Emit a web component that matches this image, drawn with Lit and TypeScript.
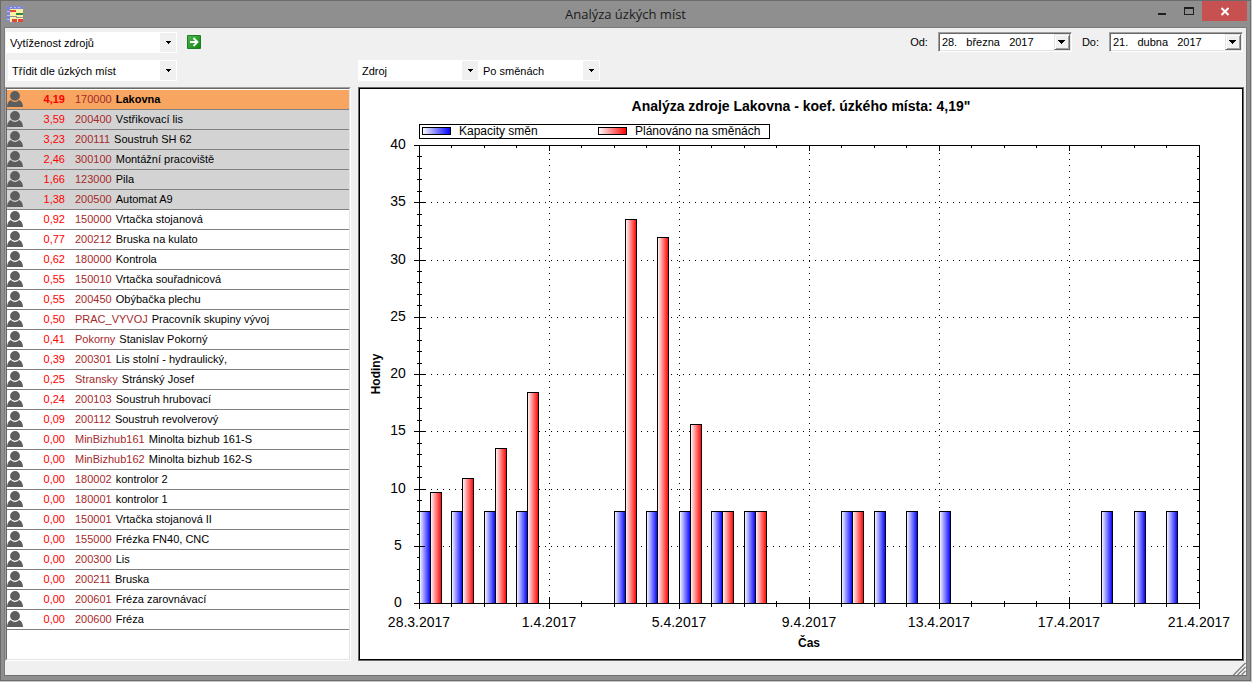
import { LitElement, html, svg, css } from "lit";
import { customElement, property, state, query } from "lit/decorators.js";
import { classMap } from "lit/directives/class-map.js";

interface Resource {
  coef: string;
  code: string;
  name: string;
}

const RESOURCES: Resource[] = [
  ["4,19", "170000", "Lakovna"],
  ["3,59", "200400", "Vstřikovací lis"],
  ["3,23", "200111", "Soustruh SH 62"],
  ["2,46", "300100", "Montážní pracoviště"],
  ["1,66", "123000", "Pila"],
  ["1,38", "200500", "Automat A9"],
  ["0,92", "150000", "Vrtačka stojanová"],
  ["0,77", "200212", "Bruska na kulato"],
  ["0,62", "180000", "Kontrola"],
  ["0,55", "150010", "Vrtačka souřadnicová"],
  ["0,55", "200450", "Obýbačka plechu"],
  ["0,50", "PRAC_VYVOJ", "Pracovník skupiny vývoj"],
  ["0,41", "Pokorny", "Stanislav Pokorný"],
  ["0,39", "200301", "Lis stolní - hydraulický,"],
  ["0,25", "Stransky", "Stránský Josef"],
  ["0,24", "200103", "Soustruh hrubovací"],
  ["0,09", "200112", "Soustruh revolverový"],
  ["0,00", "MinBizhub161", "Minolta bizhub 161-S"],
  ["0,00", "MinBizhub162", "Minolta bizhub 162-S"],
  ["0,00", "180002", "kontrolor 2"],
  ["0,00", "180001", "kontrolor 1"],
  ["0,00", "150001", "Vrtačka stojanová II"],
  ["0,00", "155000", "Frézka FN40, CNC"],
  ["0,00", "200300", "Lis"],
  ["0,00", "200211", "Bruska"],
  ["0,00", "200601", "Fréza zarovnávací"],
  ["0,00", "200600", "Fréza"],
].map(([coef, code, name]) => ({ coef, code, name }));

interface Shift {
  day: number;
  capacity: number;
  planned?: number;
}

const SHIFTS: Shift[] = [
  { day: 0, capacity: 8, planned: 9.7 },
  { day: 1, capacity: 8, planned: 10.9 },
  { day: 2, capacity: 8, planned: 13.5 },
  { day: 3, capacity: 8, planned: 18.4 },
  { day: 6, capacity: 8, planned: 33.5 },
  { day: 7, capacity: 8, planned: 32 },
  { day: 8, capacity: 8, planned: 15.6 },
  { day: 9, capacity: 8, planned: 8 },
  { day: 10, capacity: 8, planned: 8 },
  { day: 13, capacity: 8, planned: 8 },
  { day: 14, capacity: 8 },
  { day: 15, capacity: 8 },
  { day: 16, capacity: 8 },
  { day: 21, capacity: 8 },
  { day: 22, capacity: 8 },
  { day: 23, capacity: 8 },
];

const DATE_LABELS = ["28.3.2017", "1.4.2017", "5.4.2017", "9.4.2017", "13.4.2017", "17.4.2017", "21.4.2017"];
const DAYS = 24;
const MAX_HOURS = 40;

@customElement("combo-box")
class ComboBox extends LitElement {
  @property() label = "";
  @property({ attribute: false }) options: string[] = [];

  static styles = css`
    :host {
      display: block;
      position: relative;
      height: 21px;
      background: #fff;
    }
    select {
      appearance: none;
      display: block;
      box-sizing: border-box;
      width: 100%;
      height: 21px;
      margin: 0;
      padding: 1px 18px 0 4px;
      border: 0;
      border-radius: 0;
      background: transparent;
      color: #000;
      font: 11px/20px "Liberation Sans", Arial, sans-serif;
    }
    .arrow {
      position: absolute;
      top: 1px;
      right: 1px;
      width: 16px;
      height: 19px;
      background: #f0f0f0;
      pointer-events: none;
    }
  `;

  render() {
    return html`
      <svg class="arrow" viewBox="0 0 16 19" aria-hidden="true" shape-rendering="crispEdges">
        <path d="M6 8h5v1h-1v1h-1v1h-1v-1h-1v-1h-1z" fill="#000" />
      </svg>
      <select aria-label=${this.label}>
        ${this.options.map((o) => html`<option>${o}</option>`)}
      </select>
    `;
  }
}

@customElement("date-field")
class DateField extends LitElement {
  @property() label = "";
  @property() value = "";

  static styles = css`
    :host {
      display: flex;
      align-items: center;
      gap: 10px;
      font: 11px/20px "Liberation Sans", Arial, sans-serif;
      color: #000;
    }
    .box {
      box-sizing: border-box;
      display: flex;
      width: 134px;
      height: 20px;
      border: 1px solid;
      border-color: #a0a0a0 #fff #fff #a0a0a0;
      background: #fff;
      box-shadow: inset 1px 1px #696969, inset -1px -1px #e3e3e3;
      padding: 1px;
    }
    input {
      flex: 1;
      min-width: 0;
      margin: 0;
      padding: 1px 0 0 2px;
      border: 0;
      background: transparent;
      font: inherit;
      line-height: 15px;
      color: #000;
    }
    button {
      width: 16px;
      height: 16px;
      padding: 0;
      border: 1px solid;
      border-color: #e3e3e3 #696969 #696969 #e3e3e3;
      background: #f0f0f0;
      box-shadow: inset 1px 1px #fff, inset -1px -1px #a0a0a0;
    }
    svg {
      display: block;
    }
  `;

  render() {
    return html`
      <label for="date">${this.label}</label>
      <div class="box">
        <input id="date" type="text" .value=${this.value} />
        <button type="button" aria-label="Kalendář">
          <svg width="14" height="14" viewBox="0 0 14 14" shape-rendering="crispEdges">
            <path d="M3 5h7v1h-1v1h-1v1h-1v1h-1v-1h-1v-1h-1v-1h-1z" fill="#000" />
          </svg>
        </button>
      </div>
    `;
  }
}

@customElement("resource-list")
class ResourceList extends LitElement {
  @property({ attribute: false }) items: Resource[] = [];
  @state() private selected = 0;

  static styles = css`
    :host {
      display: block;
      border: 1px solid;
      border-color: #a0a0a0 #fff #fff #a0a0a0;
      background: #fff;
      font: 11px/18px "Liberation Sans", Arial, sans-serif;
    }
    ul {
      box-sizing: border-box;
      height: 100%;
      margin: 0;
      padding: 1px 0 0;
      border: 1px solid;
      border-color: #696969 #e3e3e3 #e3e3e3 #696969;
      list-style: none;
      overflow: hidden;
    }
    .row {
      display: flex;
      box-sizing: border-box;
      height: 20px;
      border-bottom: 1px solid #808080;
      color: #000;
      white-space: nowrap;
    }
    .hot {
      background: #d3d3d3;
    }
    .selected {
      background: #f7a560;
    }
    .icon {
      width: 16px;
      height: 16px;
      margin-top: 1px;
      flex: none;
    }
    .coef {
      width: 42px;
      text-align: right;
      color: #f00;
    }
    .code {
      margin-left: 10px;
      color: #a52a2a;
    }
    .name {
      margin-left: 4px;
    }
    .selected .coef,
    .selected .name {
      font-weight: bold;
    }
  `;

  render() {
    return html`<ul>
      ${this.items.map(
        (r, i) => html`<li
          class=${classMap({
            row: true,
            selected: i === this.selected,
            hot: i !== this.selected && parseFloat(r.coef) >= 1,
          })}
          @click=${() => (this.selected = i)}
        >
          <svg class="icon" viewBox="0 0 16 16" aria-hidden="true">
            <path d="M0 16C0.2 12.5 1.4 9.6 3.8 8.9Q8 13 12.2 8.9C14.6 9.6 15.8 12.5 16 16Z" fill="#5d5d5d" />
            <circle cx="8" cy="4.9" r="4.9" fill="#5d5d5d" />
          </svg>
          <span class="coef">${r.coef}</span>
          <span class="code">${r.code}</span>
          <span class="name">${r.name}</span>
        </li>`
      )}
    </ul>`;
  }
}

@customElement("shift-chart")
class ShiftChart extends LitElement {
  @query(".plot") private plot!: HTMLElement;
  @state() private w = 882;
  @state() private h = 570;
  private observer?: ResizeObserver;

  static styles = css`
    :host {
      display: flex;
      border: 1px solid #696969;
      background: #fff;
    }
    .plot {
      flex: 1;
      min-width: 0;
      border: 1px solid #000;
      overflow: hidden;
    }
    svg {
      display: block;
    }
    text {
      font-family: "Liberation Sans", Arial, sans-serif;
      font-size: 14px;
      fill: #000;
    }
    .middle {
      text-anchor: middle;
    }
    .title {
      font-weight: bold;
    }
    .axis-title {
      font-size: 12px;
      font-weight: bold;
    }
    .legend {
      font-size: 12px;
    }
    .line {
      stroke: #000;
      fill: none;
    }
    .grid {
      stroke: #000;
      stroke-dasharray: 1 5;
    }
    .bar {
      stroke: #000;
    }
  `;

  firstUpdated() {
    this.observer = new ResizeObserver(() => this.measure());
    this.observer.observe(this.plot);
  }

  disconnectedCallback() {
    super.disconnectedCallback();
    this.observer?.disconnect();
  }

  private measure() {
    this.w = Math.max(500, this.plot.clientWidth);
    this.h = Math.max(300, this.plot.clientHeight);
  }

  private bar(x0: number, x1: number, y: number, bottom: number, fill: string) {
    return svg`<rect class="bar" x=${x0 + 0.5} y=${y + 0.5} width=${x1 - x0} height=${bottom - y} fill="url(#${fill})" />`;
  }

  render() {
    const { w, h } = this;
    const left = 59;
    const right = w - 43;
    const top = 56;
    const bottom = h - 56;
    const dayWidth = (right - left) / DAYS;
    const snap = (v: number) => Math.ceil(v - 0.5);
    const x = (d: number) => snap(left + d * dayWidth);
    const y = (v: number) => Math.round(bottom - (v * (bottom - top)) / MAX_HOURS);
    const mid = (left + right) / 2;

    const ticks = [];
    const grid = [];
    for (let v = 0; v <= MAX_HOURS; v++) {
      const major = v % 5 === 0;
      const yy = y(v) + 0.5;
      const out = major ? 5 : 2;
      ticks.push(`M${left - out} ${yy}h${out * 2 + 1}M${right + 1} ${yy}h${major ? -6 : -3}`);
      if (major && v > 0 && v < MAX_HOURS) grid.push(`M${left} ${yy}H${right}`);
    }
    for (let d = 0; d <= DAYS; d++) {
      const major = d % 4 === 0;
      const xx = x(d) + 0.5;
      ticks.push(
        `M${xx} ${bottom + (major ? 6 : 4)}v${major ? -11 : -6}M${xx} ${top}v${major ? 6 : 3}`
      );
      if (major && d > 0 && d < DAYS) grid.push(`M${xx} ${bottom + 1}V${top}`);
    }

    return html`<div class="plot">
      <svg width=${w} height=${h} role="img" aria-label="Analýza zdroje Lakovna">
        <defs>
          <linearGradient id="blue"><stop offset="0" stop-color="#fff" /><stop offset="1" stop-color="#00f" /></linearGradient>
          <linearGradient id="red"><stop offset="0" stop-color="#fff" /><stop offset="1" stop-color="#f00" /></linearGradient>
        </defs>
        <text class="title middle" x=${w / 2} y="22">Analýza zdroje Lakovna - koef. úzkého místa: 4,19"</text>

        <rect class="line" x=${left + 0.5} y="35.5" width="350" height="14" />
        <rect class="bar" x=${left + 3.5} y="38.5" width="28" height="7" fill="url(#blue)" />
        <text class="legend" x=${left + 40} y="46">Kapacity směn</text>
        <rect class="bar" x=${left + 179.5} y="38.5" width="28" height="7" fill="url(#red)" />
        <text class="legend" x=${left + 216} y="46">Plánováno na směnách</text>

        <path class="grid" d=${grid.join("")} />
        <path class="line" d=${ticks.join("")} />
        ${SHIFTS.map((s) => {
          const x0 = left + s.day * dayWidth;
          const a = snap(x0);
          const b = snap(x0 + dayWidth / 3);
          const c = snap(x0 + (dayWidth * 2) / 3);
          return svg`
            ${this.bar(a, b, y(s.capacity), bottom, "blue")}
            ${s.planned ? this.bar(b, c, y(s.planned), bottom, "red") : ""}`;
        })}
        <rect class="line" x=${left + 0.5} y=${top + 0.5} width=${right - left} height=${bottom - top} />
        <path class="line" d=${`M${left - 5} ${y(5) + 0.5}h11`} />

        ${Array.from({ length: 9 }, (_, i) => svg`
          <text class="middle" x=${left - 21} y=${y(i * 5) + 4}>${i * 5}</text>`)}
        ${DATE_LABELS.map((label, i) => svg`
          <text class="middle" x=${x(i * 4)} y=${bottom + 24}>${label}</text>`)}
        <text class="axis-title middle" x=${mid} y=${bottom + 44}>Čas</text>
        <text class="axis-title middle" transform=${`translate(20 ${(top + bottom) / 2}) rotate(-90)`}>Hodiny</text>
      </svg>
    </div>`;
  }
}

@customElement("app-root")
class AppRoot extends LitElement {
  static styles = css`
    :host {
      display: block;
      height: 100vh;
      box-sizing: border-box;
      padding: 0 1px 1px 0;
      background: #c8c8c8;
      font: 11px/20px "Liberation Sans", Arial, sans-serif;
      color: #000;
    }
    .window {
      display: flex;
      flex-direction: column;
      box-sizing: border-box;
      height: 100%;
      padding: 0 3px 4px 3px;
      border: 1px solid #6b6b6b;
      background: #8f8f8f;
    }
    .titlebar {
      display: grid;
      grid-template-columns: 1fr auto 1fr;
      height: 26px;
      flex: none;
    }
    .app-icon {
      margin: 5px 0 0 3px;
    }
    h1 {
      margin: 0;
      font: 13px/26px "Open Sans", "Noto Sans", sans-serif;
      color: #1c1c1c;
    }
    .window-buttons {
      display: flex;
      justify-content: flex-end;
      align-items: flex-start;
    }
    .window-buttons button {
      width: 27px;
      height: 20px;
      padding: 0;
      border: 0;
      background: transparent;
    }
    .window-buttons .close {
      width: 45px;
      background: #c75050;
    }
    .window-buttons svg {
      display: block;
      margin: 0 auto;
    }
    main {
      flex: 1;
      min-height: 0;
      display: flex;
      flex-direction: column;
      border: 1px solid #7b7b7b;
      border-bottom-color: #6f6f6f;
      background: #f0f0f0;
    }
    .bar {
      display: flex;
      align-items: flex-start;
      height: 21px;
      flex: none;
    }
    .top {
      margin: 4px 3px 0 1px;
    }
    .mode {
      width: 171px;
    }
    .go {
      width: 14px;
      height: 14px;
      margin: 3px 0 0 10px;
      padding: 0;
      border: 0;
      background: none;
    }
    .go svg {
      display: block;
    }
    .dates {
      display: flex;
      gap: 10px;
      margin-left: auto;
    }
    .panes {
      flex: 1;
      min-height: 0;
      display: grid;
      grid-template-columns: 346px minmax(0, 1fr);
      grid-template-rows: 21px minmax(0, 1fr);
      gap: 6px 7px;
      margin: 7px 2px 0 0;
    }
    .sort {
      width: 169px;
      margin-left: 3px;
    }
    .split {
      display: flex;
    }
    .unit {
      width: 121px;
    }
    .grip {
      display: flex;
      justify-content: flex-end;
      height: 14px;
      flex: none;
    }
  `;

  render() {
    return html`
      <div class="window">
        <header class="titlebar">
          <svg class="app-icon" width="17" height="17" viewBox="0 0 17 17" shape-rendering="crispEdges" aria-hidden="true">
            <path fill="#f8f2a4" d="M0 0h16v16H0z" />
            <path fill="#7d86dc" d="M0 0h16v3H0zM0 3h3v13H0z" />
            <path fill="#b9bdf0" d="M3 1h2v1H3zM7 1h2v1H7zM11 1h2v1h-2zM0 5h3v1H0zM0 9h3v1H0zM0 13h3v1H0z" />
            <path fill="#e0463c" d="M3 4h6v2H3zM5 13h5v3H5zM11 13h5v3h-5z" />
            <path fill="#2f8a3c" d="M9 7h7v2H9z" />
            <path fill="#8a93a0" d="M3 10h7v1H3zM9 11h7v1H9z" />
          </svg>
          <h1>Analýza úzkých míst</h1>
          <div class="window-buttons">
            <button type="button" aria-label="Minimalizovat">
              <svg width="27" height="20" shape-rendering="crispEdges"><path d="M10 12h8v2h-8z" fill="#1e1e1e" /></svg>
            </button>
            <button type="button" aria-label="Maximalizovat">
              <svg width="27" height="20" shape-rendering="crispEdges"><path d="M9 6h10v8H9zM10 8v5h8V8z" fill="#1e1e1e" fill-rule="evenodd" /></svg>
            </button>
            <button type="button" class="close" aria-label="Zavřít">
              <svg width="45" height="20"><path d="M19.5 7l7 7M26.5 7l-7 7" stroke="#fff" stroke-width="2" /></svg>
            </button>
          </div>
        </header>
        <main>
          <div class="bar top">
            <combo-box class="mode" label="Pohled" .options=${["Vytíženost zdrojů"]}></combo-box>
            <button type="button" class="go" aria-label="Zobrazit">
              <svg width="14" height="14" viewBox="0 0 14 14">
                <defs>
                  <linearGradient id="green" x2="1" y2="1"><stop offset="0" stop-color="#4fb54f" /><stop offset="1" stop-color="#0c8a0c" /></linearGradient>
                </defs>
                <rect width="14" height="14" rx="1" fill="#1d7d24" />
                <rect x="1" y="1" width="12" height="12" fill="url(#green)" />
                <path d="M3 7h7M6.5 3L10.5 7L6.5 11" fill="none" stroke="#fff" stroke-width="1.8" />
              </svg>
            </button>
            <div class="dates">
              <date-field label="Od:" value="28.   března   2017"></date-field>
              <date-field label="Do:" value="21.   dubna   2017"></date-field>
            </div>
          </div>
          <div class="panes">
            <combo-box class="sort" label="Řazení" .options=${["Třídit dle úzkých míst"]}></combo-box>
            <div class="split">
              <combo-box class="unit" label="Předmět" .options=${["Zdroj"]}></combo-box>
              <combo-box class="unit" label="Členění" .options=${["Po směnách"]}></combo-box>
            </div>
            <resource-list .items=${RESOURCES}></resource-list>
            <shift-chart></shift-chart>
          </div>
          <div class="grip">
            <svg width="13" height="14" viewBox="0 0 13 14" aria-hidden="true">
              <path d="M2 14L13 3M6 14L13 7M10 14L13 11" stroke="#fff" stroke-width="1" />
              <path d="M0.5 14L12.5 2M4.5 14L12.5 6M8.5 14L12.5 10" stroke="#808080" stroke-width="1.5" />
            </svg>
          </div>
        </main>
      </div>
    `;
  }
}
